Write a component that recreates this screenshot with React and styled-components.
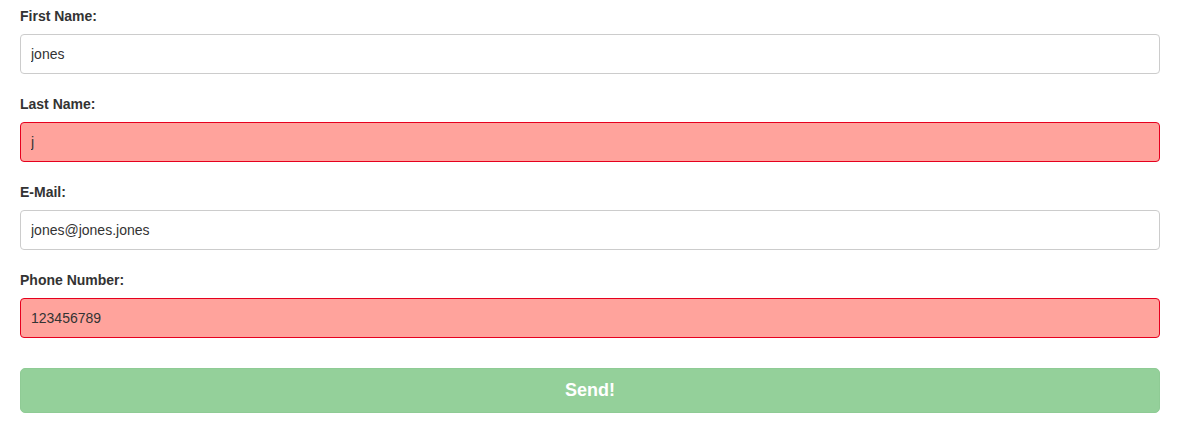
import React from "react";
import styled, { createGlobalStyle } from "styled-components";

const GlobalStyle = createGlobalStyle`
  body {
    margin: 0;
    background: #fff;
    font-family: "Liberation Sans", Arial, sans-serif;
    color: #333;
  }
`;

const fields = [
  { label: "First Name:", value: "jones", invalid: false },
  { label: "Last Name:", value: "j", invalid: true },
  { label: "E-Mail:", value: "jones@jones.jones", invalid: false },
  { label: "Phone Number:", value: "123456789", invalid: true },
];

function App() {
  return (
    <>
      <GlobalStyle />
      <Form onSubmit={(e) => e.preventDefault()}>
        {fields.map((f) => (
          <Group key={f.label}>
            <Label>{f.label}</Label>
            <Input defaultValue={f.value} invalid={f.invalid ? 1 : 0} />
          </Group>
        ))}
        <Button type="submit">Send!</Button>
      </Form>
    </>
  );
}

const Form = styled.form`
  width: 1140px;
  padding: 6px 0 0 20px;
  display: flex;
  flex-direction: column;
`;
const Group = styled.div`
  display: flex;
  flex-direction: column;
  margin-bottom: 20px;
`;
const Label = styled.label`
  font-size: 14px;
  line-height: 20px;
  font-weight: bold;
  color: #333;
  margin-bottom: 8px;
`;
const Input = styled.input`
  box-sizing: border-box;
  height: 40px;
  width: 100%;
  padding: 0 10px;
  font-family: "Liberation Sans", Arial, sans-serif;
  font-size: 14px;
  color: #333;
  border-radius: 4px;
  outline: none;
  border: 1px solid ${(p) => (p.invalid ? "#e6001e" : "#ccc")};
  background: ${(p) => (p.invalid ? "#ffa39c" : "#fff")};
`;
const Button = styled.button`
  margin-top: 10px;
  height: 45px;
  width: 100%;
  border: 1px solid #8fcb95;
  border-radius: 5px;
  background: #94d09a;
  color: #fff;
  font-family: "Liberation Sans", Arial, sans-serif;
  font-size: 18px;
  font-weight: bold;
  cursor: pointer;
`;

export default App;
